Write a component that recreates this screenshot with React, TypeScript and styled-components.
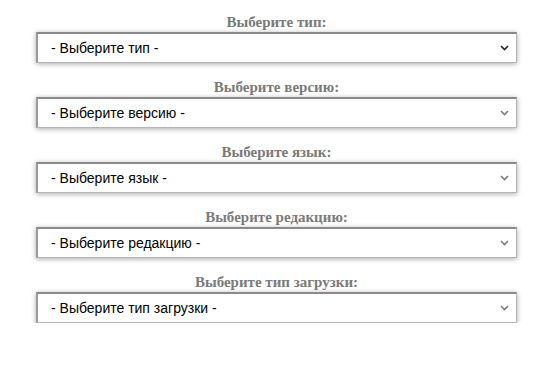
import * as React from 'react';
import styled, { createGlobalStyle } from "styled-components";

const GlobalStyle = createGlobalStyle`
  html, body {
    margin: 0;
    padding: 0;
    background: #ffffff;
  }
`;

const Form = styled.form`
  display: flex;
  flex-direction: column;
  gap: 14px;
  width: 481px;
  padding: 12px 0 0 36px;
`;

const Field = styled.div`
  display: flex;
  flex-direction: column;
`;

const Label = styled.label`
  display: block;
  height: 20px;
  line-height: 20px;
  text-align: center;
  font-family: "Liberation Serif", "DejaVu Serif", serif;
  font-weight: bold;
  font-size: 15px;
  color: #7a7a7a;
`;

const SelectBox = styled.div`
  position: relative;
  height: 31px;
`;

const Select = styled.select`
  box-sizing: border-box;
  appearance: none;
  width: 100%;
  height: 31px;
  margin: 0;
  padding: 0 10px 0 13px;
  font-family: "Liberation Sans", Arial, sans-serif;
  font-size: 14px;
  color: #000000;
  background: #ffffff;
  border: 1px solid #b5b5b5;
  border-top: 2px solid #8a8a8a;
  border-left: 2px solid #9a9a9a;
  border-radius: 0;
  box-shadow: 0 1px 5px rgba(0, 0, 0, 0.35);
  outline: none;
`;

const Chevron = styled.svg<{ $active?: boolean }>`
  position: absolute;
  right: 8px;
  top: 13px;
  width: 9px;
  height: 6px;
  pointer-events: none;
  color: ${(p) => (p.$active ? "#222222" : "#7c7c7c")};
`;

interface IField {
  id: string,
  label: string,
  placeholder: string,
}

const fields: IField[] = [
  { id: "type", label: "Выберите тип:", placeholder: "- Выберите тип -" },
  { id: "version", label: "Выберите версию:", placeholder: "- Выберите версию -" },
  { id: "lang", label: "Выберите язык:", placeholder: "- Выберите язык -" },
  { id: "edition", label: "Выберите редакцию:", placeholder: "- Выберите редакцию -" },
  { id: "download", label: "Выберите тип загрузки:", placeholder: "- Выберите тип загрузки -" },
];

const App = () => (
  <>
    <GlobalStyle />
    <Form>
      {fields.map((f, i) => (
        <Field key={f.id}>
          <Label htmlFor={f.id}>{f.label}</Label>
          <SelectBox>
            <Select id={f.id} defaultValue="">
              <option value="">{f.placeholder}</option>
            </Select>
            <Chevron $active={i === 0} viewBox="0 0 9 6" fill="none">
              <path d="M1 1 L4.5 4.5 L8 1" stroke="currentColor" strokeWidth="1.6" />
            </Chevron>
          </SelectBox>
        </Field>
      ))}
    </Form>
  </>
);

export default App;
